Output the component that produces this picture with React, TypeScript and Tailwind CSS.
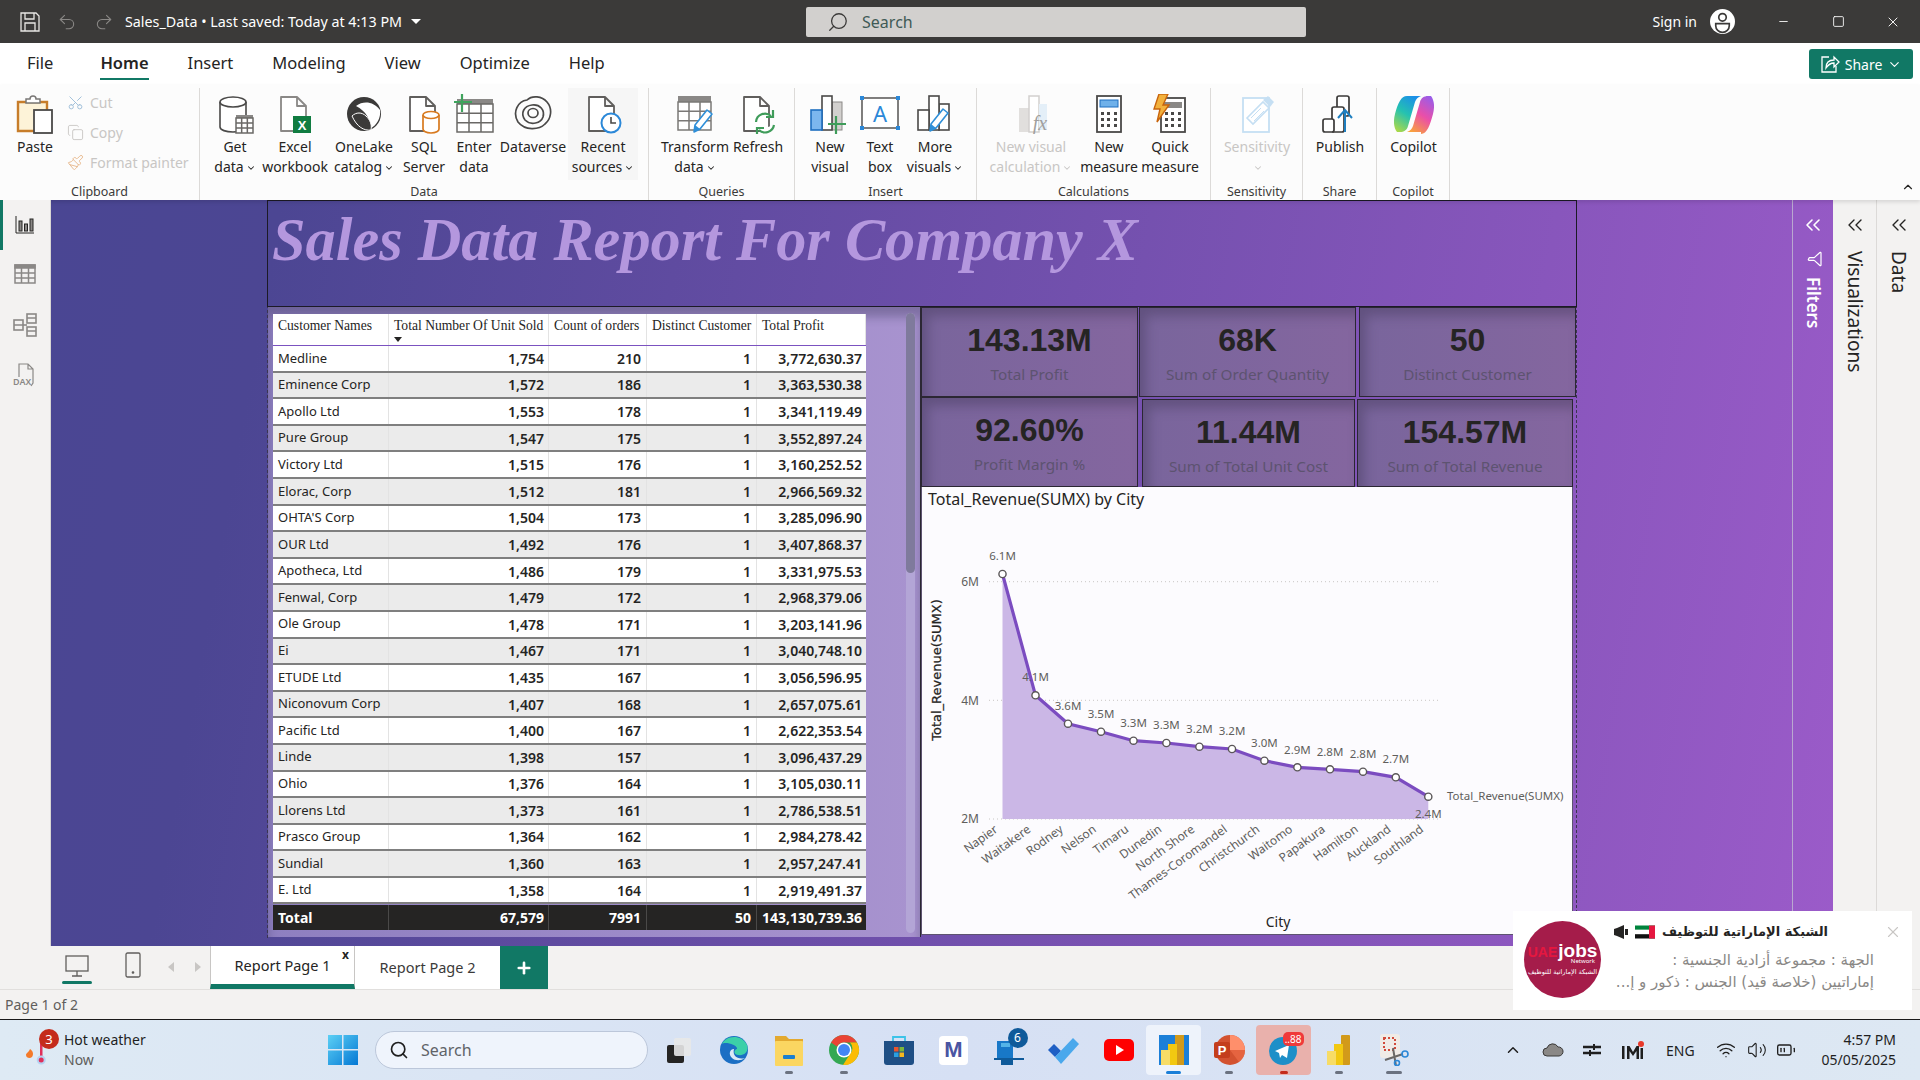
import { ChevronDown, ChevronsLeft, ChevronUp, Minus, Plus, Redo2, Search, Square, Undo2, X, Wifi, Volume2, BatteryMedium, Scissors, Copy, Paintbrush, Funnel } from "lucide-react"
import type { ReactNode } from "react"

const Pencil = ({ x = 0, y = 0 }: { x?: number; y?: number }) => (
  <g transform={`translate(${x} ${y})`}>
    <path d="M14 1l5 4L7 20l-6 3 1-7z" fill="#fff" stroke="#2f8fd8" strokeWidth="1.6" strokeLinejoin="round" />
    <path d="M2 16l5 4-6 3z" fill="#2f8fd8" />
  </g>
)

const Doc = ({ c = "#605e5c" }: { c?: string }) => (
  <path d="M6 3h16l9 9v25H6z M22 3v9h9" fill="#fff" stroke={c} strokeWidth="1.8" strokeLinejoin="round" />
)

const TableGrid = ({ x, y, w, h, c = "#7a7876" }: { x: number; y: number; w: number; h: number; c?: string }) => (
  <g stroke={c} strokeWidth="1.5" fill="#fff">
    <rect x={x} y={y} width={w} height={h} />
    <path d={`M${x} ${y + h / 3}h${w} M${x} ${y + (2 * h) / 3}h${w} M${x + w / 3} ${y}v${h} M${x + (2 * w) / 3} ${y}v${h}`} />
  </g>
)

const Icon = ({ children }: { children: ReactNode }) => (
  <svg viewBox="0 0 40 40" className="h-[40px] w-[40px]">{children}</svg>
)

const icons: Record<string, ReactNode> = {
  paste: (
    <Icon>
      <path d="M3 8h29v29H3z" fill="#fdf3d8" stroke="#c77d2a" strokeWidth="2.4" />
      <path d="M11 9V5h4a3 3 0 016 0h4v4z" fill="#fff" stroke="#7a7876" strokeWidth="1.5" />
      <rect x="19" y="16" width="18" height="23" fill="#fff" stroke="#4a4948" strokeWidth="1.8" />
    </Icon>
  ),
  getdata: (
    <Icon>
      <path d="M5 8v25c0 3 6 5 13 5s13-2 13-5V8" fill="#fff" stroke="#4a4948" strokeWidth="1.6" />
      <ellipse cx="18" cy="8" rx="13" ry="5" fill="#fff" stroke="#4a4948" strokeWidth="1.6" />
      <rect x="21" y="21" width="17" height="5" fill="#8a8886" />
      <TableGrid x={21} y={24} w={17} h={15} c="#6a6866" />
    </Icon>
  ),
  excel: (
    <Icon>
      <Doc c="#8a8886" />
      <rect x="18" y="22" width="18" height="17" fill="#107c41" />
      <text x="27" y="35.5" textAnchor="middle" fontSize="13" fontWeight="700" fill="#fff" fontFamily="Liberation Sans">X</text>
    </Icon>
  ),
  onelake: (
    <Icon>
      <circle cx="20" cy="20" r="17" fill="#3b3a39" />
      <path d="M12 12c8-6 18-4 24 4 1 8-3 15-10 19C27 26 22 17 12 12z" fill="#fff" />
      <path d="M8 22c4-4 10-4 14 0 4 4 6 8 5 14-7 1-14-3-19-14z" fill="#3b3a39" stroke="#fff" strokeWidth="1" />
    </Icon>
  ),
  sql: (
    <Icon>
      <Doc />
      <path d="M19 21v14c0 2 3 4 8 4s8-2 8-4V21" fill="#fff" stroke="#d87a1f" strokeWidth="1.7" />
      <ellipse cx="27" cy="21" rx="8" ry="3.5" fill="#fff" stroke="#d87a1f" strokeWidth="1.7" />
    </Icon>
  ),
  enter: (
    <Icon>
      <rect x="3" y="5" width="36" height="7" fill="#8a8886" />
      <TableGrid x={3} y={10} w={36} h={28} c="#6a6866" />
      <path d="M8 0v18 M0 8h18" stroke="#3fa35d" strokeWidth="2.2" />
    </Icon>
  ),
  dataverse: (
    <Icon>
      <path d="M5 28C-1 18 5 7 14 6c5-5 15-4 20 2 6 7 4 17-2 22-6 6-20 7-27-2z" fill="none" stroke="#4a4948" strokeWidth="1.7" />
      <path d="M12 26c-5-7-1-14 7-15 8-1 13 5 11 12-2 6-12 9-18 3z" fill="none" stroke="#4a4948" strokeWidth="1.7" />
      <ellipse cx="20" cy="19" rx="5" ry="4.5" fill="none" stroke="#4a4948" strokeWidth="1.7" />
    </Icon>
  ),
  recent: (
    <Icon>
      <Doc />
      <circle cx="28" cy="29" r="9.5" fill="#fff" stroke="#2b88d8" strokeWidth="2" />
      <path d="M28 23v6h5" fill="none" stroke="#4a4948" strokeWidth="1.6" />
    </Icon>
  ),
  transform: (
    <Icon>
      <rect x="3" y="2" width="33" height="6" fill="#8a8886" />
      <TableGrid x={3} y={8} w={33} h={28} />
      <Pencil x={18} y={15} />
    </Icon>
  ),
  refresh: (
    <Icon>
      <Doc />
      <path d="M18 28a9 9 0 0115-6 M36 31a9 9 0 01-15 5" fill="#fff" stroke="#3f9c5a" strokeWidth="2.2" />
      <path d="M35 16v7h-7 M19 40v-6h7" fill="none" stroke="#3f9c5a" strokeWidth="2.2" />
    </Icon>
  ),
  newvisual: (
    <Icon>
      <rect x="22" y="8" width="10" height="28" fill="#d2d0ce" stroke="#8a8886" />
      <rect x="12" y="2" width="10" height="34" fill="#fff" stroke="#4a4948" strokeWidth="1.6" />
      <rect x="1" y="16" width="11" height="20" fill="#7cb7ee" stroke="#1f6fc0" strokeWidth="1.6" />
      <path d="M26 22v18 M18 30h18" stroke="#3f9c5a" strokeWidth="2.2" />
    </Icon>
  ),
  textbox: (
    <Icon>
      <rect x="2" y="4" width="36" height="30" fill="#fff" stroke="#4a4948" strokeWidth="1.4" />
      <g fill="#2b88d8">
        <rect x="0" y="2" width="4" height="4" />
        <rect x="36" y="2" width="4" height="4" />
        <rect x="0" y="32" width="4" height="4" />
        <rect x="36" y="32" width="4" height="4" />
      </g>
      <text x="20" y="28" textAnchor="middle" fontSize="22" fill="#2b88d8" fontFamily="Noto Sans">A</text>
    </Icon>
  ),
  morevisuals: (
    <Icon>
      <g fill="#fff" stroke="#4a4948" strokeWidth="1.6">
        <rect x="24" y="10" width="10" height="26" />
        <rect x="14" y="2" width="10" height="34" />
        <rect x="3" y="16" width="11" height="20" />
      </g>
      <Pencil x={14} y={14} />
    </Icon>
  ),
  calc: (
    <Icon>
      <rect x="8" y="14" width="10" height="24" fill="#e1dfdd" />
      <rect x="18" y="2" width="10" height="36" fill="#fff" stroke="#d2d0ce" strokeWidth="1.5" />
      <rect x="28" y="10" width="8" height="26" fill="#e4eff8" />
      <text x="29" y="36" textAnchor="middle" fontSize="20" fontStyle="italic" fill="#a19f9d" fontFamily="Liberation Serif">fx</text>
    </Icon>
  ),
  measure: (
    <Icon>
      <rect x="8" y="2" width="24" height="36" fill="#fff" stroke="#4a4948" strokeWidth="1.8" />
      <rect x="11" y="6" width="18" height="7" fill="#6fb1ea" stroke="#1f6fc0" />
      <path d="M12 18h3v3h-3z M18 18h3v3h-3z M25 18h3v3h-3z M12 24h3v3h-3z M18 24h3v3h-3z M25 24h3v3h-3z M12 30h3v3h-3z M18 30h3v3h-3z M25 30h3v3h-3z" fill="#4a4948" />
    </Icon>
  ),
  quick: (
    <Icon>
      <rect x="11" y="4" width="24" height="34" fill="#fff" stroke="#4a4948" strokeWidth="1.8" />
      <rect x="14" y="8" width="18" height="6" fill="#8a8886" />
      <path d="M15 18h3v3h-3z M21 18h3v3h-3z M28 18h3v3h-3z M15 24h3v3h-3z M21 24h3v3h-3z M28 24h3v3h-3z M15 30h3v3h-3z M21 30h3v3h-3z M28 30h3v3h-3z" fill="#4a4948" />
      <path d="M9 0h9l-5 11h6L7 28l3-13H4z" fill="#f2b13c" stroke="#c8640c" strokeWidth="1.4" />
    </Icon>
  ),
  sensitivity: (
    <Icon>
      <rect x="6" y="4" width="26" height="34" fill="#fff" stroke="#c5dff3" strokeWidth="1.8" />
      <path d="M10 24L26 8l6 6-16 16z" fill="#fff" stroke="#c5dff3" strokeWidth="1.6" />
      <path d="M26 6l5-4 6 6-4 5z" fill="#c5dff3" />
      <path d="M14 24l10-10 M17 27l10-10" stroke="#c5dff3" />
    </Icon>
  ),
  publish: (
    <Icon>
      <g fill="#fff" stroke="#3b3a39" strokeWidth="1.7">
        <rect x="17" y="2" width="12" height="20" rx="2" />
        <rect x="12" y="13" width="12" height="25" rx="2" />
        <rect x="3" y="25" width="11" height="13" rx="2" />
      </g>
      <path d="M25 38V17 M18 24l7-8 7 8" fill="none" stroke="#1f7fc0" strokeWidth="2" />
    </Icon>
  ),
  copilot: (
    <Icon>
      <defs>
        <linearGradient id="cpa" x1="0.7" y1="0" x2="0.2" y2="1">
          <stop offset="0" stopColor="#1b8fe8" />
          <stop offset="0.5" stopColor="#25c2b0" />
          <stop offset="1" stopColor="#a8d84a" />
        </linearGradient>
        <linearGradient id="cpb" x1="0.8" y1="0" x2="0.3" y2="1">
          <stop offset="0" stopColor="#9a5ce8" />
          <stop offset="0.5" stopColor="#ea4fa8" />
          <stop offset="1" stopColor="#f9a23c" />
        </linearGradient>
      </defs>
      <path d="M13 2h14c-3 1-5 3-6 6l-7 24c-1 4-4 6-8 6H3C0 34-1 28 1 20 4 9 7 2 13 2z" fill="url(#cpa)" />
      <path d="M27 38H13c3-1 5-3 6-6l7-24c1-4 4-6 8-6h3c3 4 4 10 2 18-3 11-6 20-12 20z" fill="url(#cpb)" />
    </Icon>
  ),
}

const Caret = () => <ChevronDown className="ml-[2px] inline-block h-[10px] w-[10px]" strokeWidth={2.5} />

type ItemProps = { w: number; icon: string; lines: string[]; chevron?: boolean; disabled?: boolean; hover?: boolean; ml?: boolean }

const RibbonItem = ({ w, icon, lines, chevron, disabled, hover, ml }: ItemProps) => (
  <div
    style={{ width: w }}
    className={`flex h-[92px] shrink-0 flex-col items-center pt-[6px] text-center text-[14px] leading-[20px] whitespace-nowrap ${disabled ? "text-[#c8c6c4]" : "text-[#252423]"} ${hover ? "bg-[#f6f6f6]" : ""} ${ml ? "ml-[5px]" : ""}`}
  >
    <div className="mb-[3px] h-[40px]">{icons[icon]}</div>
    {lines.map((l, i) => (
      <span key={i}>
        {l}
        {chevron && i === lines.length - 1 ? <Caret /> : null}
      </span>
    ))}
  </div>
)

const Group = ({ w, label, pl = 0, children }: { w: number; label: string; pl?: number; children: ReactNode }) => (
  <div style={{ width: w }} className="mt-[3px] flex h-[112px] shrink-0 flex-col border-r border-[#dcdad8]">
    <div style={{ paddingLeft: pl }} className="flex">{children}</div>
    <div className="mt-auto text-center text-[12.5px] leading-[16px] text-[#3b3a39]">{label}</div>
  </div>
)

const SmallAction = ({ icon, label }: { icon: ReactNode; label: string }) => (
  <div className="flex h-[30px] items-center gap-[5px] text-[14px] text-[#c8c6c4]">
    <span className="flex w-[20px] justify-center">{icon}</span>
    {label}
  </div>
)

const TitleBar = () => (
  <div className="flex h-[43px] shrink-0 items-center bg-[#3b3a39] text-white">
    <svg viewBox="0 0 20 20" className="ml-[20px] h-[20px] w-[20px]" fill="none" stroke="#e8e6e4" strokeWidth="1.3">
      <path d="M1 1h15l3 3v15H1z M5 1v6h9V1 M5 19v-8h10v8" />
    </svg>
    <Undo2 className="ml-[17px] h-[20px] w-[20px] text-[#8a8886]" strokeWidth={1.3} />
    <Redo2 className="ml-[17px] h-[20px] w-[20px] text-[#8a8886]" strokeWidth={1.3} />
    <span className="ml-[11px] text-[14.3px] whitespace-nowrap">Sales_Data • Last saved: Today at 4:13 PM</span>
    <span className="ml-[9px] h-0 w-0 border-x-[5px] border-t-[5px] border-x-transparent border-t-white" />
    <div className="ml-[385px] flex h-[30px] w-[500px] items-center rounded-[2px] bg-[#d2d0ce] text-[#3f5a56]">
      <Search className="ml-[21px] h-[22px] w-[22px] -scale-x-100 text-[#3b3a39]" strokeWidth={1.4} />
      <span className="ml-[13px] text-[16px]">Search</span>
    </div>
    <span className="ml-auto text-[14px]">Sign in</span>
    <svg viewBox="0 0 24 24" className="ml-[13px] h-[25px] w-[25px]">
      <circle cx="12" cy="12" r="12" fill="#fff" />
      <circle cx="12" cy="8" r="3.6" fill="none" stroke="#3b3a39" strokeWidth="1.6" />
      <path d="M5.5 14h13v2a6 6 0 01-13 0z" fill="none" stroke="#3b3a39" strokeWidth="1.6" />
    </svg>
    <Minus className="ml-[42px] h-[13px] w-[13px]" strokeWidth={1.6} />
    <Square className="ml-[42px] h-[13px] w-[13px]" strokeWidth={1.6} />
    <X className="ml-[40px] mr-[19px] h-[16px] w-[16px]" strokeWidth={1.4} />
  </div>
)

const tabs = ["File", "Home", "Insert", "Modeling", "View", "Optimize", "Help"]

const Tabs = () => (
  <div className="flex h-[42px] shrink-0 items-center bg-white pl-[27px] pr-[7px] text-[16.5px] text-[#252423]">
    <div className="-mt-[2px] flex gap-[39px]">
      {tabs.map((t) => (
        <div key={t} className={`relative ${t === "Home" ? "ml-[8px] font-semibold" : ""}`}>
          {t}
          {t === "Home" && <div className="absolute -bottom-[5px] left-0 h-[2px] w-full bg-[#117865]" />}
        </div>
      ))}
    </div>
    <div className="ml-auto flex h-[30px] w-[104px] items-center justify-center gap-[5px] rounded-[3px] bg-[#117865] text-[14px] text-white">
      <svg viewBox="0 0 20 20" className="h-[20px] w-[20px]" fill="none" stroke="#fff" strokeWidth="1.3">
        <path d="M9 3H2v15h14v-6" />
        <path d="M6 14c0-5 3-8 8-8V3l5 5-5 5V9c-4 0-6 2-8 5z" />
      </svg>
      Share
      <ChevronDown className="h-[15px] w-[15px]" strokeWidth={1.8} />
    </div>
  </div>
)

const Ribbon = () => (
  <div className="relative flex h-[115px] shrink-0 bg-[#fcfcfc] shadow-[0_2px_4px_rgba(0,0,0,0.12)]">
    <Group w={200} label="Clipboard">
      <RibbonItem w={70} icon="paste" lines={["Paste"]} />
      <div className="-ml-[5px] -mt-[1px] flex flex-col">
        <SmallAction icon={<Scissors className="h-[17px] w-[17px] -rotate-90 text-[#9cbcd8]" strokeWidth={1.3} />} label="Cut" />
        <SmallAction icon={<Copy className="h-[17px] w-[17px] text-[#c8c6c4]" strokeWidth={1.3} />} label="Copy" />
        <SmallAction icon={<Paintbrush className="h-[17px] w-[17px] text-[#e8bb92]" strokeWidth={1.4} />} label="Format painter" />
      </div>
    </Group>
    <Group w={449} label="Data" pl={5}>
      <RibbonItem w={60} icon="getdata" lines={["Get", "data"]} chevron />
      <RibbonItem w={60} icon="excel" lines={["Excel", "workbook"]} />
      <RibbonItem w={78} icon="onelake" lines={["OneLake", "catalog"]} chevron />
      <RibbonItem w={42} icon="sql" lines={["SQL", "Server"]} />
      <RibbonItem w={58} icon="enter" lines={["Enter", "data"]} />
      <RibbonItem w={60} icon="dataverse" lines={["Dataverse"]} />
      <RibbonItem w={70} icon="recent" lines={["Recent", "sources"]} chevron hover ml />
    </Group>
    <Group w={146} label="Queries" pl={8}>
      <RibbonItem w={76} icon="transform" lines={["Transform", "data"]} chevron />
      <RibbonItem w={50} icon="refresh" lines={["Refresh"]} />
    </Group>
    <Group w={182} label="Insert" pl={10}>
      <RibbonItem w={50} icon="newvisual" lines={["New", "visual"]} />
      <RibbonItem w={50} icon="textbox" lines={["Text", "box"]} />
      <RibbonItem w={60} icon="morevisuals" lines={["More", "visuals"]} chevron />
    </Group>
    <Group w={234} label="Calculations" pl={6}>
      <RibbonItem w={96} icon="calc" lines={["New visual", "calculation"]} chevron disabled />
      <RibbonItem w={60} icon="measure" lines={["New", "measure"]} />
      <RibbonItem w={62} icon="quick" lines={["Quick", "measure"]} />
    </Group>
    <Group w={92} label="Sensitivity">
      <RibbonItem w={92} icon="sensitivity" lines={["Sensitivity", ""]} chevron disabled />
    </Group>
    <Group w={74} label="Share">
      <RibbonItem w={74} icon="publish" lines={["Publish"]} />
    </Group>
    <Group w={73} label="Copilot">
      <RibbonItem w={73} icon="copilot" lines={["Copilot"]} />
    </Group>
    <ChevronUp className="absolute bottom-[6px] right-[5px] h-[14px] w-[14px] text-[#252423]" strokeWidth={2} />
  </div>
)

const LeftNav = () => (
  <div className="relative flex w-[51px] shrink-0 flex-col items-center border-r border-[#d8d6d4] bg-[#f3f2f1] pt-[15px]">
    <div className="absolute left-0 top-0 h-[50px] w-[3px] bg-[#117865]" />
    <svg viewBox="0 0 20 20" className="h-[20px] w-[20px]" fill="#8a8886" stroke="#252423" strokeWidth="1">
      <path d="M1 1v17h18" fill="none" />
      <rect x="4" y="6" width="3" height="10" />
      <rect x="9.5" y="9" width="3" height="7" />
      <rect x="15" y="4" width="3" height="12" />
    </svg>
    <svg viewBox="0 0 22 20" className="mt-[29px] h-[20px] w-[22px]" fill="none" stroke="#8a8886" strokeWidth="1.5">
      <rect x="1" y="1" width="20" height="18" />
      <path d="M1 1h20v3H1z" fill="#8a8886" />
      <path d="M1 9h20 M1 14h20 M7.5 4v15 M14.5 4v15" />
    </svg>
    <svg viewBox="0 0 24 24" className="mt-[29px] h-[24px] w-[24px]" fill="#f3f2f1" stroke="#8a8886" strokeWidth="1.6">
      <path d="M9 12h5" />
      <rect x="1" y="7" width="9" height="10" />
      <rect x="14" y="1" width="9" height="9" />
      <rect x="14" y="14" width="9" height="9" />
      <path d="M1 12h9 M14 5h9 M14 18h9" />
    </svg>
    <div className="relative mt-[26px] h-[24px] w-[24px]">
      <svg viewBox="0 0 24 24" className="absolute inset-0" fill="none" stroke="#8a8886" strokeWidth="1.2">
        <path d="M6 14V1h9l5 5v14l-2 3 M15 1v5h5" />
      </svg>
      <span className="absolute bottom-0 left-0 text-[9px] leading-[10px] font-semibold text-[#8a8886]">DAX</span>
    </div>
  </div>
)

const rows: [string, string, string, string][] = [
  ["Medline", "1,754", "210", "3,772,630.37"],
  ["Eminence Corp", "1,572", "186", "3,363,530.38"],
  ["Apollo Ltd", "1,553", "178", "3,341,119.49"],
  ["Pure Group", "1,547", "175", "3,552,897.24"],
  ["Victory Ltd", "1,515", "176", "3,160,252.52"],
  ["Elorac, Corp", "1,512", "181", "2,966,569.32"],
  ["OHTA'S Corp", "1,504", "173", "3,285,096.90"],
  ["OUR Ltd", "1,492", "176", "3,407,868.37"],
  ["Apotheca, Ltd", "1,486", "179", "3,331,975.53"],
  ["Fenwal, Corp", "1,479", "172", "2,968,379.06"],
  ["Ole Group", "1,478", "171", "3,203,141.96"],
  ["Ei", "1,467", "171", "3,040,748.10"],
  ["ETUDE Ltd", "1,435", "167", "3,056,596.95"],
  ["Niconovum Corp", "1,407", "168", "2,657,075.61"],
  ["Pacific Ltd", "1,400", "167", "2,622,353.54"],
  ["Linde", "1,398", "157", "3,096,437.29"],
  ["Ohio", "1,376", "164", "3,105,030.11"],
  ["Llorens Ltd", "1,373", "161", "2,786,538.51"],
  ["Prasco Group", "1,364", "162", "2,984,278.42"],
  ["Sundial", "1,360", "163", "2,957,247.41"],
  ["E. Ltd", "1,358", "164", "2,919,491.37"],
]

const gridCols = "grid grid-cols-[116px_160px_98px_110px_109px]"

const SalesTable = () => (
  <div className="relative h-[630px] w-[653px] shrink-0 border-r border-[#2b2733] bg-[linear-gradient(90deg,#8e7fc0,#a893cf)] pl-[5px] pt-[7px] shadow-[inset_0_10px_10px_rgba(50,45,80,0.35)]">
    <div className="w-[593px] text-[14px] text-[#252423]">
      <div className={`${gridCols} h-[32px] border-b border-[#7b52c0] bg-white font-['Liberation_Serif',serif] text-[13.6px] leading-[16px]`}>
        {["Customer Names", "Total Number Of Unit Sold", "Count of orders", "Distinct Customer", "Total Profit"].map((h, i) => (
          <div key={h} className="relative border-r border-[#e3e3e3] pl-[5px] pt-[4px] whitespace-nowrap">
            {h}
            {i === 1 && <span className="absolute bottom-[3px] left-[5px] h-0 w-0 border-x-[4px] border-t-[5px] border-x-transparent border-t-[#252423]" />}
          </div>
        ))}
      </div>
      {rows.map((r, i) => (
        <div key={r[0]} className={`${gridCols} h-[26.6px] border-b-2 border-[#7f7f7f] ${i % 2 ? "bg-[#ebebeb]" : "bg-white"}`}>
          <div className="flex items-center border-r border-[#e3e3e3] pl-[5px] text-[13px] whitespace-nowrap">{r[0]}</div>
          <div className="flex items-center justify-end border-r border-[#e3e3e3] pr-[4px] font-semibold">{r[1]}</div>
          <div className="flex items-center justify-end border-r border-[#e3e3e3] pr-[5px] font-semibold">{r[2]}</div>
          <div className="flex items-center justify-end border-r border-[#e3e3e3] pr-[5px] font-semibold">1</div>
          <div className="flex items-center justify-end pr-[4px] font-semibold">{r[3]}</div>
        </div>
      ))}
      <div className={`${gridCols} mt-[1px] h-[25px] bg-[#252423] font-bold text-white`}>
        <div className="flex items-center border-r border-[#4a4948] pl-[5px]">Total</div>
        <div className="flex items-center justify-end border-r border-[#4a4948] pr-[4px]">67,579</div>
        <div className="flex items-center justify-end border-r border-[#4a4948] pr-[5px]">7991</div>
        <div className="flex items-center justify-end border-r border-[#4a4948] pr-[5px]">50</div>
        <div className="flex items-center justify-end pr-[4px]">143,130,739.36</div>
      </div>
    </div>
    <div className="absolute right-[5px] top-[6px] h-[620px] w-[9px] rounded-full bg-[#b3a5d6]">
      <div className="h-[260px] w-full rounded-full bg-[#7f7a9c]" />
    </div>
  </div>
)

const Kpi = ({ value, label, cls }: { value: string; label: string; cls: string }) => (
  <div className={`flex shrink-0 flex-col items-center border border-[#2b2733] bg-[linear-gradient(90deg,#79659c,#84669f)] pt-[15px] shadow-[inset_6px_8px_12px_rgba(55,45,75,0.35)] ${cls}`}>
    <div className="font-['Liberation_Sans',sans-serif] text-[32px] leading-[34px] font-bold text-[#252423]">{value}</div>
    <div className="mt-[7px] text-[15.3px] leading-[20px] text-[#5d5370]">{label}</div>
  </div>
)

const cities = ["Napier", "Waitakere", "Rodney", "Nelson", "Timaru", "Dunedin", "North Shore", "Thames-Coromandel", "Christchurch", "Waitomo", "Papakura", "Hamilton", "Auckland", "Southland"]
const vals = ["6.1M", "4.1M", "3.6M", "3.5M", "3.3M", "3.3M", "3.2M", "3.2M", "3.0M", "2.9M", "2.8M", "2.8M", "2.7M", "2.4M"]
const ptX = [1001.5, 1034.5, 1067, 1100, 1132.5, 1165.4, 1198.4, 1231, 1263.4, 1296.4, 1329, 1362, 1394.8, 1427.3]
const ptY = [574, 695.3, 723.7, 731.7, 740.7, 743, 746.7, 749, 760.7, 767.3, 769.3, 771.7, 777.3, 796.7]
const lblY = [555.7, 676.7, 705.7, 713.7, 722.7, 724.7, 728.7, 731.3, 742.7, 749.7, 751.7, 753.7, 759.3, 813.7]
const line = ptX.map((x, i) => `${x},${ptY[i]}`).join(" ")

const RevenueChart = () => (
  <div className="flex h-[448px] flex-col border-x border-b border-[#5d5370] bg-[#fcfbfe]">
    <div className="h-[24px] pl-[6px] pt-[2px] text-[16px] leading-[20px] text-[#252423]">Total_Revenue(SUMX) by City</div>
    <svg viewBox="921 511 652 423" className="h-[423px] w-[652px]" fontFamily="Noto Sans" fontSize="12" fill="#605e5c">
      {[581.7, 700.3, 819].map((y) => (
        <line key={y} x1="988" x2="1439" y1={y} y2={y} stroke="#c8c6c4" strokeDasharray="1 3" />
      ))}
      <text x="978" y="586" textAnchor="end">6M</text>
      <text x="978" y="704.5" textAnchor="end">4M</text>
      <text x="978" y="823" textAnchor="end">2M</text>
      <polygon points={`1001.5,819 ${line} 1427.3,819`} fill="#cbb7e6" />
      <polyline points={line} fill="none" stroke="#7b4cc0" strokeWidth="3.2" />
      {ptX.map((x, i) => (
        <circle key={cities[i]} cx={x} cy={ptY[i]} r="3.6" fill="#fff" stroke="#5a5658" strokeWidth="1.4" />
      ))}
      {ptX.map((x, i) => (
        <text key={vals[i] + x} x={x} y={lblY[i] + 4} textAnchor="middle" fontSize="11.5">{vals[i]}</text>
      ))}
      {ptX.map((x, i) => (
        <text key={cities[i]} transform={`translate(${x - 4} ${831}) rotate(-36)`} textAnchor="end" fontSize="12">{cities[i]}</text>
      ))}
      <text x="1446" y="799.5" fontSize="11.5">Total_Revenue(SUMX)</text>
      <text transform="translate(940 670) rotate(-90)" textAnchor="middle" fontFamily="DejaVu Sans" fontSize="13" fill="#252423" stroke="#252423" strokeWidth="0.25">Total_Revenue(SUMX)</text>
      <text x="1277" y="927" textAnchor="middle" fontSize="14" fill="#252423">City</text>
    </svg>
  </div>
)

const Report = () => (
  <div className="ml-[216px] h-[738px] w-[1310px] shrink-0 border-x border-dashed border-[#3a3550]">
    <div className="-mx-[1px] h-[107px] border border-[#1c1a26] pl-[4px]">
      <div className="font-['Liberation_Serif',serif] text-[60.3px] leading-[78px] font-bold italic whitespace-nowrap text-[#b497de]">Sales Data Report For Company X</div>
    </div>
    <div className="flex">
      <SalesTable />
      <div className="flex w-[655px] flex-col">
        <div className="flex h-[90px]">
          <Kpi cls="w-[217px]" value="143.13M" label="Total Profit" />
          <Kpi cls="ml-[1px] w-[217px]" value="68K" label="Sum of Order Quantity" />
          <Kpi cls="ml-[3px] w-[217px]" value="50" label="Distinct Customer" />
        </div>
        <div className="flex h-[90px]">
          <Kpi cls="w-[217px]" value="92.60%" label="Profit Margin %" />
          <Kpi cls="ml-[4px] mt-[2px] w-[213px]" value="11.44M" label="Sum of Total Unit Cost" />
          <Kpi cls="ml-[2px] mt-[2px] w-[216px]" value="154.57M" label="Sum of Total Revenue" />
        </div>
        <div className="w-[652px]">
          <RevenueChart />
        </div>
      </div>
    </div>
  </div>
)

const FiltersStrip = () => (
  <div className="ml-auto flex w-[41px] shrink-0 flex-col items-center border-l border-[#b9a8cf] pt-[13px] text-white">
    <ChevronsLeft className="h-[24px] w-[24px]" strokeWidth={1.6} />
    <Funnel className="mt-[14px] ml-[4px] h-[16px] w-[16px] rotate-90" strokeWidth={1.8} />
    <div className="mt-[10px] text-[17px] leading-[20px] font-semibold [writing-mode:vertical-rl]">Filters</div>
  </div>
)

const Pane = ({ label, border }: { label: string; border?: boolean }) => (
  <div className={`flex flex-1 flex-col items-center bg-[#f3f2f1] pt-[13px] text-[#252423] ${border ? "border-r border-[#dcdad8]" : ""}`}>
    <ChevronsLeft className="h-[24px] w-[24px]" strokeWidth={1.4} />
    <div className="mt-[14px] text-[19px] leading-[22px] [writing-mode:vertical-rl]">{label}</div>
  </div>
)

const PageTabs = () => (
  <div className="flex h-[44px] shrink-0 border-b border-[#e1dfdd] bg-[#f3f2f1]">
    <div className="flex w-[210px] items-start pl-[62px] pt-[9px]">
      <div className="flex w-[30px] flex-col items-center">
        <svg viewBox="0 0 24 22" className="h-[22px] w-[24px]" fill="none" stroke="#605e5c" strokeWidth="1.3">
          <rect x="1" y="1" width="22" height="15" />
          <path d="M12 16v5 M7 21h10" />
        </svg>
        <div className="mt-[4px] h-[3px] w-full rounded-full bg-[#117865]" />
      </div>
      <svg viewBox="0 0 16 26" className="ml-[33px] mt-[-3px] h-[26px] w-[16px]" fill="none" stroke="#605e5c" strokeWidth="1.3">
        <rect x="1" y="1" width="14" height="24" rx="1.5" />
        <circle cx="8" cy="20.5" r="0.7" fill="#605e5c" />
      </svg>
      <span className="ml-[27px] mt-[7px] h-0 w-0 border-y-[5px] border-r-[6px] border-y-transparent border-r-[#c8c6c4]" />
      <span className="ml-[21px] mt-[7px] h-0 w-0 border-y-[5px] border-l-[6px] border-y-transparent border-l-[#c8c6c4]" />
    </div>
    <div className="relative flex w-[145px] items-center justify-center border-x border-[#c8c6c4] border-b-[5px] border-b-[#117865] bg-white pt-[2px] text-[14.5px] text-[#252423]">
      Report Page 1
      <span className="absolute right-[5px] top-[2px] text-[12px] font-bold leading-[14px]">x</span>
    </div>
    <div className="flex w-[145px] items-center justify-center bg-white text-[14.5px] text-[#3b3a39]">Report Page 2</div>
    <div className="flex w-[48px] items-center justify-center bg-[#117865]">
      <Plus className="h-[18px] w-[18px] text-white" strokeWidth={3.5} />
    </div>
  </div>
)

const Toast = () => (
  <div className="absolute left-[1513px] top-[911px] flex h-[99px] w-[399px] bg-white">
    <div className="relative ml-[11px] mt-[10px] flex h-[77px] w-[77px] shrink-0 flex-col items-center justify-center rounded-full bg-[#a51c4a] text-white">
      <div className="flex items-baseline font-['Liberation_Sans',sans-serif] text-[14px] leading-[15px] font-bold">
        <span className="text-[#e5173f]">UAE</span>
        <span className="ml-[1px] text-[19px]">jobs</span>
      </div>
      <div className="-mt-[2px] self-end pr-[6px] text-[6px] leading-[7px]">Network</div>
      <div className="mt-[2px] font-['DejaVu_Sans',sans-serif] text-[6.5px] leading-[10px]" dir="rtl">الشبكة الإماراتية للتوظيف</div>
    </div>
    <div className="relative flex-1 pr-[38px] font-['DejaVu_Sans',sans-serif]" dir="rtl">
      <div className="flex h-[42px] items-center gap-[7px] pr-[46px] text-[13px] font-bold text-[#252423]">
        <span className="whitespace-nowrap">الشبكة الإماراتية للتوظيف</span>
        <svg viewBox="0 0 20 13" className="h-[14px] w-[20px]">
          <rect width="20" height="4.3" fill="#00843d" />
          <rect y="4.3" width="20" height="4.4" fill="#fff" />
          <rect y="8.7" width="20" height="4.3" fill="#111" />
          <rect x="14" width="6" height="13" fill="#e5173f" />
        </svg>
        <svg viewBox="0 0 14 14" className="h-[14px] w-[14px]" fill="#252423">
          <path d="M0 4l3-1 7-3v14L3 11 0 10z M11 4h3v6h-3z" />
        </svg>
      </div>
      <div className="-mt-[4px] text-[15px] leading-[22px] whitespace-nowrap text-[#8a8886]">الجهة : مجموعة أزادية  الجنسية :</div>
      <div className="text-[15px] leading-[23px] whitespace-nowrap text-[#8a8886]">إماراتيين (خلاصة قيد) الجنس : ذكور و إ...</div>
      <X className="absolute right-[10px] top-[12px] h-[18px] w-[18px] text-[#c8c6c4]" strokeWidth={1.5} />
    </div>
  </div>
)

const dock: { key: string; dot?: string; wide?: boolean; active?: boolean; red?: boolean; el: ReactNode }[] = [
  {
    key: "taskview",
    el: (
      <svg viewBox="0 0 30 30" className="h-[30px] w-[30px]">
        <rect x="3" y="10" width="17" height="18" rx="2" fill="#252423" />
        <rect x="10" y="3" width="17" height="18" rx="2" fill="#e8e8e8" opacity="0.9" />
      </svg>
    ),
  },
  {
    key: "edge",
    el: (
      <svg viewBox="0 0 30 32" className="h-[32px] w-[30px]">
        <circle cx="15" cy="16" r="14" fill="#1b6fc4" />
        <path d="M3 10C6 2 22-1 28 11c2 6-2 11-9 10-6-1-3-6-1-6 1-4-12-8-15-5z" fill="#3cd0a8" />
        <path d="M15 15c-4 0-6 5-2 9 3 3 9 3 13 0-7 2-13-2-11-9z" fill="#fff" opacity="0.85" />
      </svg>
    ),
  },
  {
    key: "files",
    dot: "#6b7280",
    el: (
      <svg viewBox="0 0 30 32" className="h-[32px] w-[30px]">
        <path d="M1 2h11l3 3h14v25H1z" fill="#e3a92f" />
        <rect x="1" y="7" width="28" height="25" rx="1" fill="#fbd661" />
        <rect x="9" y="21" width="12" height="4" rx="1" fill="#1b7fcf" />
      </svg>
    ),
  },
  {
    key: "chrome",
    dot: "#6b7280",
    el: (
      <svg viewBox="0 0 32 32" className="h-[32px] w-[32px]">
        <circle cx="16" cy="16" r="15" fill="#34a853" />
        <path d="M3 8.5A15 15 0 0129 8.5H16a8 8 0 00-7 4z" fill="#ea4335" />
        <path d="M29 8.5A15 15 0 0115 31l7-11a8 8 0 000-11.5z" fill="#fbbc05" />
        <circle cx="16" cy="16" r="7.5" fill="#fff" />
        <circle cx="16" cy="16" r="6" fill="#4285f4" />
      </svg>
    ),
  },
  {
    key: "store",
    el: (
      <svg viewBox="0 0 30 32" className="h-[32px] w-[30px]">
        <path d="M9 8V3h12v5" fill="none" stroke="#3cc3e8" strokeWidth="1.8" />
        <path d="M0 7h30v21a3 3 0 01-3 3H3a3 3 0 01-3-3z" fill="#1f4f85" />
        <rect x="10" y="13" width="4.5" height="4.5" fill="#e8552d" />
        <rect x="15.5" y="13" width="4.5" height="4.5" fill="#7cb63c" />
        <rect x="10" y="18.5" width="4.5" height="4.5" fill="#2b9fe0" />
        <rect x="15.5" y="18.5" width="4.5" height="4.5" fill="#f5b81f" />
      </svg>
    ),
  },
  {
    key: "moqups",
    el: (
      <div className="flex h-[29px] w-[29px] items-center justify-center rounded-[4px] bg-white font-['Liberation_Sans',sans-serif] text-[22px] leading-[22px] font-bold text-[#4a55a2]">M</div>
    ),
  },
  {
    key: "teams",
    el: (
      <div className="relative h-[30px] w-[30px]">
        <svg viewBox="0 0 30 30" className="h-[30px] w-[30px]">
          <path d="M3 6h16v18H3z" fill="#1878c8" />
          <rect x="7" y="8" width="9" height="4" fill="#54b4e8" />
          <rect x="0" y="23" width="30" height="2" fill="#0f5a9a" />
          <rect x="7" y="25" width="12" height="5" fill="#0f5a9a" />
        </svg>
        <span className="absolute -right-[4px] -top-[7px] flex h-[20px] w-[20px] items-center justify-center rounded-full bg-[#0f5a9a] text-[12px] leading-none text-white">6</span>
      </div>
    ),
  },
  {
    key: "todo",
    el: (
      <svg viewBox="0 0 32 28" className="h-[28px] w-[32px]">
        <path d="M0 14l6-6 7 7-6 6z" fill="#1f5fc4" />
        <path d="M7 21L25 2l6 6-18 20z" fill="#4aa8ec" />
      </svg>
    ),
  },
  {
    key: "youtube",
    el: (
      <svg viewBox="0 0 30 22" className="h-[22px] w-[30px]">
        <rect width="30" height="22" rx="5" fill="#ff0000" />
        <path d="M12 6l8 5-8 5z" fill="#fff" />
      </svg>
    ),
  },
  {
    key: "powerbi-active",
    dot: "#1b7fd8",
    wide: true,
    active: true,
    el: (
      <svg viewBox="0 0 30 30" className="h-[30px] w-[30px]">
        <rect width="30" height="30" fill="#1b7fd8" />
        <rect x="16" y="0" width="9" height="30" fill="#d29a1a" />
        <rect x="9" y="9" width="9" height="21" fill="#f2c811" />
        <rect x="2" y="15" width="9" height="15" fill="#f7dc66" />
      </svg>
    ),
  },
  {
    key: "ppt",
    dot: "#6b7280",
    el: (
      <svg viewBox="0 0 32 32" className="h-[32px] w-[32px]">
        <circle cx="17" cy="16" r="15" fill="#d35230" />
        <path d="M17 1a15 15 0 0115 15H17z" fill="#ff8f6b" />
        <path d="M17 16h15a15 15 0 01-6 12z" fill="#ed6c47" opacity="0.7" />
        <rect x="1" y="8" width="16" height="16" rx="2" fill="#c43e1c" />
        <text x="9" y="21" textAnchor="middle" fontSize="13" fontWeight="700" fill="#fff" fontFamily="Liberation Sans">P</text>
      </svg>
    ),
  },
  {
    key: "telegram",
    dot: "#c42b1c",
    red: true,
    el: (
      <div className="relative h-[30px] w-[30px]">
        <svg viewBox="0 0 30 30" className="h-[30px] w-[30px]">
          <circle cx="14" cy="16" r="14" fill="#1e8fc8" />
          <path d="M6 16l14-6-2 13-5-3-2 3-1-5z" fill="#fff" />
        </svg>
        <span className="absolute -right-[5px] -top-[3px] rounded-[5px] bg-[#f03a3a] px-[2px] text-[10px] leading-[14px] text-white">..88</span>
      </div>
    ),
  },
  {
    key: "powerbi",
    dot: "#6b7280",
    el: (
      <svg viewBox="0 0 24 30" className="h-[30px] w-[24px]">
        <rect x="14" y="0" width="9" height="30" rx="1" fill="#d29a1a" />
        <rect x="7" y="9" width="9" height="21" fill="#f2c811" />
        <rect x="0" y="16" width="9" height="14" fill="#f7dc66" />
      </svg>
    ),
  },
  {
    key: "snip",
    dot: "#6b7280",
    wide: true,
    el: (
      <svg viewBox="0 0 30 32" className="h-[32px] w-[30px]">
        <rect x="1" y="0" width="20" height="24" rx="3" fill="#f0ebe6" />
        <rect x="5" y="4" width="11" height="12" fill="none" stroke="#d14a3a" strokeWidth="2" strokeDasharray="2 2" />
        <path d="M14 14l3 18 M24 20L6 26" stroke="#6a6866" strokeWidth="2" />
        <circle cx="26" cy="20" r="3" fill="none" stroke="#2b88d8" strokeWidth="1.6" />
        <circle cx="18" cy="29" r="2.5" fill="none" stroke="#2b88d8" strokeWidth="1.6" />
      </svg>
    ),
  },
]

const Taskbar = () => (
  <div className="flex h-[61px] shrink-0 items-center border-t border-[#1a1a1a] bg-[linear-gradient(90deg,#deeaf4,#d6e0f4_50%,#dde8f3)] text-[#1f1f1f]">
    <div className="relative ml-[24px] flex h-[40px] w-[40px] shrink-0 items-center">
      <svg viewBox="0 0 26 26" className="mt-[4px] h-[26px] w-[26px]">
        <path d="M6 10c3 2 4 5 2 8-2 2-6 1-6-2 0-2 3-3 4-6z" fill="#f47a2a" />
        <rect x="16" y="3" width="2.5" height="16" fill="#e02f5a" />
        <circle cx="17.2" cy="21" r="3.5" fill="#e02f5a" stroke="#b5d3f2" strokeWidth="2" />
      </svg>
      <span className="absolute left-[15px] top-[-1px] flex h-[20px] w-[20px] items-center justify-center rounded-full bg-[#c42b1c] text-[13px] leading-none text-white">3</span>
    </div>
    <div className="flex w-[264px] shrink-0 flex-col text-[14px] leading-[20px]">
      <span>Hot weather</span>
      <span className="text-[#605e5c]">Now</span>
    </div>
    <svg viewBox="0 0 30 30" className="h-[30px] w-[30px] shrink-0">
      <defs>
        <linearGradient id="win" x1="0" y1="0" x2="1" y2="1">
          <stop offset="0" stopColor="#5cd0f5" />
          <stop offset="1" stopColor="#0478d4" />
        </linearGradient>
      </defs>
      <path d="M0 0h14v14H0z M15.5 0H30v14H15.5z M0 15.5h14V30H0z M15.5 15.5H30V30H15.5z" fill="url(#win)" />
    </svg>
    <div className="ml-[17px] flex h-[38px] w-[273px] shrink-0 items-center rounded-full border border-[#bcc7da] bg-[#eff4fc]">
      <Search className="ml-[13px] h-[20px] w-[20px] text-[#1f1f1f]" strokeWidth={2} />
      <span className="ml-[12px] text-[16px] text-[#5f6368]">Search</span>
    </div>
    <div className="ml-[3px] flex shrink-0">
      {dock.map((d) => (
        <div key={d.key} className={`relative flex h-[50px] w-[55px] shrink-0 items-center justify-center rounded-[4px] ${d.active ? "bg-[#eef3fb]" : ""} ${d.red ? "bg-[#e9b1ac]" : ""}`}>
          {d.el}
          {d.dot && <span style={{ background: d.dot, width: d.active ? 15 : d.wide ? 16 : 8 }} className="absolute bottom-[1px] h-[3px] rounded-full" />}
        </div>
      ))}
    </div>
    <div className="ml-[82px] flex w-[20px] shrink-0 justify-center">
      <ChevronUp className="h-[18px] w-[18px]" strokeWidth={2} />
    </div>
    <svg viewBox="0 0 22 14" className="ml-[19px] h-[14px] w-[22px] shrink-0" fill="#8a8886" stroke="#3b3a39">
      <path d="M5 13a4 4 0 010-8 6 6 0 0111-1 4.5 4.5 0 011 9z" />
    </svg>
    <svg viewBox="0 0 18 14" className="ml-[19px] h-[14px] w-[18px] shrink-0" stroke="#1f1f1f" strokeWidth="2.4" fill="none">
      <path d="M0 4h18 M0 10h18" />
      <path d="M11 1v6 M7 7v6" strokeWidth="2" />
    </svg>
    <svg viewBox="0 0 22 18" className="ml-[21px] h-[18px] w-[22px] shrink-0" fill="#1f1f1f">
      <rect x="0" y="5" width="2.5" height="13" />
      <path d="M5 18V5h2.5l3.5 6 3.5-6H17v13h-2.5V10L11 15 7.5 10v8z" />
      <rect x="18.5" y="7" width="2.5" height="11" />
      <circle cx="19" cy="3" r="3" fill="#e8392a" />
    </svg>
    <span className="ml-[22px] w-[36px] shrink-0 text-[14px]">ENG</span>
    <Wifi className="ml-[14px] h-[20px] w-[20px] shrink-0" strokeWidth={1.6} />
    <Volume2 className="ml-[11px] h-[20px] w-[20px] shrink-0" strokeWidth={1.3} />
    <BatteryMedium className="ml-[9px] h-[20px] w-[20px] shrink-0" strokeWidth={1.6} />
    <div className="flex flex-1 flex-col items-end pr-[24px] text-[14px] leading-[20px]">
      <span>4:57 PM</span>
      <span>05/05/2025</span>
    </div>
  </div>
)

export default function App() {
  return (
    <div className="relative flex h-[1080px] w-[1920px] flex-col overflow-hidden bg-[#f3f2f1] font-['Noto_Sans',sans-serif]">
      <TitleBar />
      <Tabs />
      <Ribbon />
      <div className="flex h-[790px] shrink-0">
        <div className="flex w-[1833px] shrink-0 flex-col">
          <div className="flex h-[746px] shrink-0">
            <LeftNav />
            <div className="flex flex-1 bg-[linear-gradient(100deg,#4a4693_0%,#4c4693_12%,#9b5bc9_100%)]">
              <Report />
              <FiltersStrip />
            </div>
          </div>
          <PageTabs />
        </div>
        <div className="flex flex-1 border-b border-[#e1dfdd]">
          <Pane label="Visualizations" border />
          <Pane label="Data" />
        </div>
      </div>
      <div className="flex h-[29px] shrink-0 items-center bg-[#f3f2f1] pl-[5px] text-[14px] text-[#605e5c]">
        Page 1 of 2
        <div className="ml-auto mr-[23px] flex items-start">
          <span className="h-[1px] w-[5px] bg-[#605e5c]" />
          <span className="ml-[160px] h-[6px] w-[20px] border-x border-b border-[#a19f9d]" />
        </div>
      </div>
      <Taskbar />
      <Toast />
    </div>
  )
}
